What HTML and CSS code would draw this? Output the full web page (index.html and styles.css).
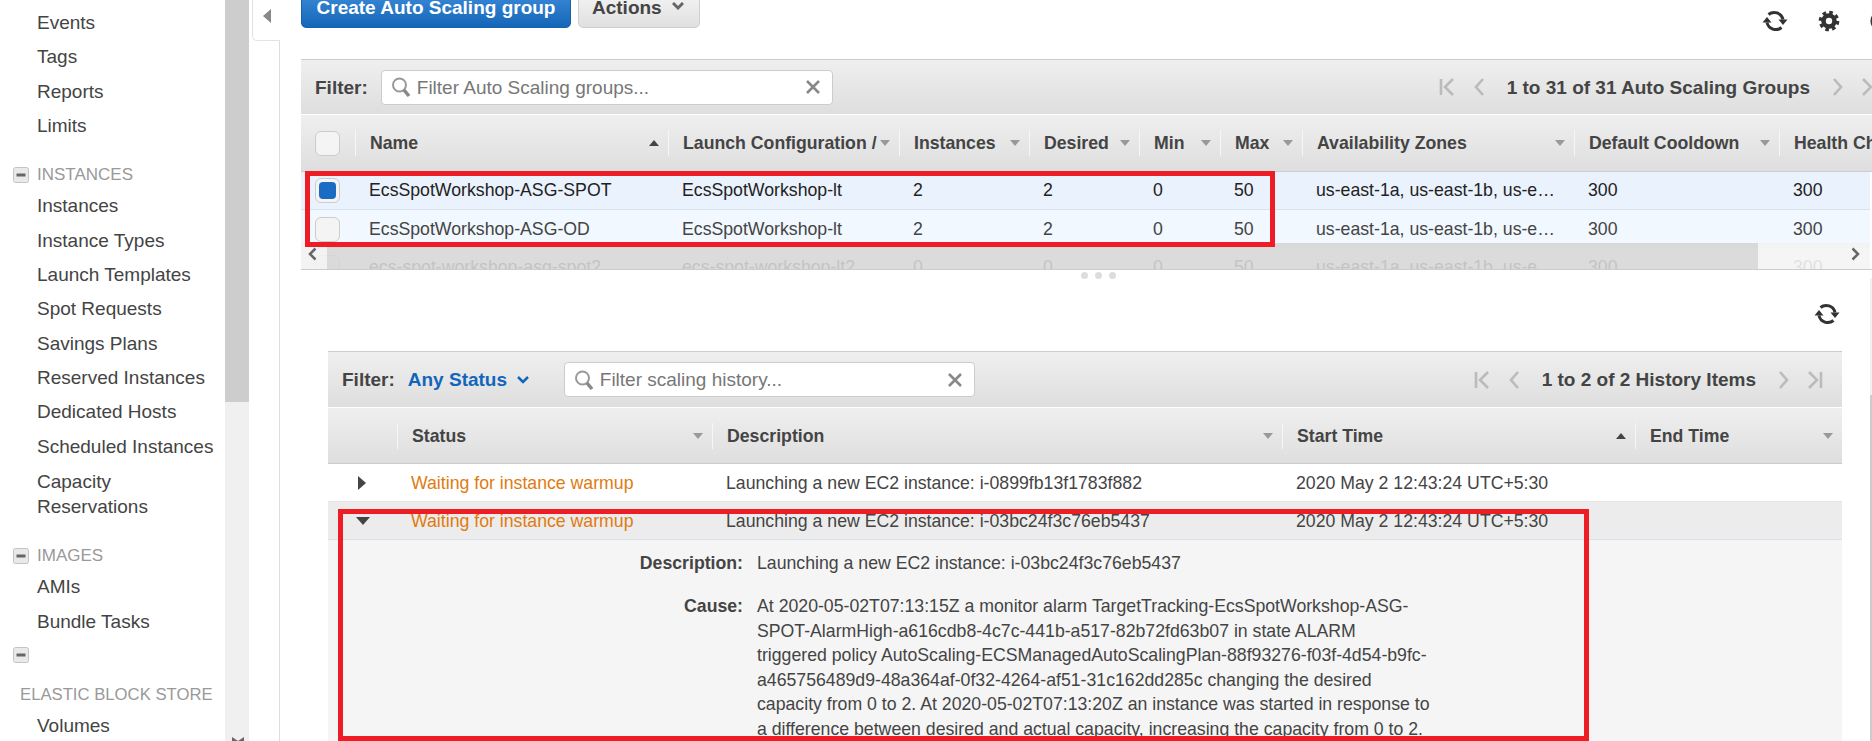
FILE: index.html
```html
<!DOCTYPE html>
<html lang="en">
<head>
<meta charset="utf-8">
<title>Auto Scaling Groups</title>
<link rel="stylesheet" href="styles.css">
</head>
<body>
<svg class="defs" width="0" height="0" aria-hidden="true">
  <symbol id="i-refresh" viewBox="0 0 26 26">
    <path d="M6.5 6.5A9 9 0 0 1 21 11.5M19.5 19.5A9 9 0 0 1 5 14.5" fill="none" stroke="#333" stroke-width="3"/>
    <path d="M16.5 11.5h9l-4.5 5.5zM0.5 14.5h9L5 9z" fill="#333"/>
  </symbol>
  <symbol id="i-search" viewBox="0 0 20 22">
    <circle cx="8.5" cy="9" r="6.5" fill="none" stroke="#999" stroke-width="2"/>
    <path d="M13 14l5 6" stroke="#888" stroke-width="3.5"/>
  </symbol>
  <symbol id="i-x" viewBox="0 0 16 16">
    <path d="M2 2l12 12M14 2L2 14" stroke="#888" stroke-width="2.6"/>
  </symbol>
  <symbol id="i-first" viewBox="0 0 16 20"><path d="M2 2v16M14 2L6 10l8 8" fill="none" stroke="#bbb" stroke-width="2.6"/></symbol>
  <symbol id="i-prev" viewBox="0 0 12 20"><path d="M10 2L3 10l7 8" fill="none" stroke="#bbb" stroke-width="2.6"/></symbol>
  <symbol id="i-next" viewBox="0 0 12 20"><path d="M2 2l7 8-7 8" fill="none" stroke="#bbb" stroke-width="2.6"/></symbol>
  <symbol id="i-last" viewBox="0 0 16 20"><path d="M14 2v16M2 2l8 8-8 8" fill="none" stroke="#bbb" stroke-width="2.6"/></symbol>
  <symbol id="i-min" viewBox="0 0 16 16">
    <rect x=".5" y=".5" width="15" height="15" rx="2" fill="#e9e9e9" stroke="#c4c4c4"/>
    <rect x="3.500" y="6.500" width="9" height="3" fill="#666"/>
  </symbol>
</svg>

<div class="app">
  <nav class="side">
    <a class="item first">Events</a>
    <a class="item">Tags</a>
    <a class="item">Reports</a>
    <a class="item">Limits</a>
    <div class="head"><svg class="min"><use href="#i-min"/></svg><span>INSTANCES</span></div>
    <a class="item">Instances</a>
    <a class="item">Instance Types</a>
    <a class="item">Launch Templates</a>
    <a class="item">Spot Requests</a>
    <a class="item">Savings Plans</a>
    <a class="item">Reserved Instances</a>
    <a class="item">Dedicated Hosts</a>
    <a class="item">Scheduled Instances</a>
    <a class="item two">Capacity<br>Reservations</a>
    <div class="head"><svg class="min"><use href="#i-min"/></svg><span>IMAGES</span></div>
    <a class="item">AMIs</a>
    <a class="item">Bundle Tasks</a>
    <div class="head-wrap"><svg class="min"><use href="#i-min"/></svg><span>ELASTIC BLOCK STORE</span></div>
    <a class="item">Volumes</a>
  </nav>

  <div class="vscroll">
    <div class="vthumb"></div>
    <svg class="vdown" viewBox="0 0 12 4"><path d="M0 0l6 4 6-4v4H0z" fill="#666"/></svg>
  </div>

  <div class="collapse"><div class="tab"><i class="tab-arrow"></i></div></div>

  <main class="content">
    <div class="toolbar">
      <button class="btn primary">Create Auto Scaling group</button>
      <button class="btn plain">Actions <svg class="chev" viewBox="0 0 12 9"><path d="M1 1l5 5 5-5" fill="none" stroke="#666" stroke-width="3"/></svg></button>
      <div class="tools">
        <svg class="ico26"><use href="#i-refresh"/></svg>
        <svg class="gear" viewBox="0 0 24 24"><circle cx="12" cy="12" r="6" fill="none" stroke="#333" stroke-width="5"/><circle cx="12" cy="12" r="9.500" fill="none" stroke="#333" stroke-width="3.500" stroke-dasharray="3.900 3.560"/></svg>
        <svg class="gear" viewBox="0 0 24 24"><circle cx="12" cy="12" r="10" fill="none" stroke="#333" stroke-width="3"/></svg>
      </div>
    </div>

    <section class="panel upper">
      <div class="bar">
        <b class="flabel">Filter:</b>
        <div class="search s-up"><svg class="s-ico"><use href="#i-search"/></svg><span>Filter Auto Scaling groups...</span><svg class="s-x"><use href="#i-x"/></svg></div>
        <div class="pager p-up">
          <svg class="pg16"><use href="#i-first"/></svg><svg class="pg12"><use href="#i-prev"/></svg>
          <b>1 to 31 of 31 Auto Scaling Groups</b>
          <svg class="pg12"><use href="#i-next"/></svg><svg class="pg16"><use href="#i-last"/></svg>
        </div>
      </div>
      <div class="thead cols-up">
        <div class="chk-cell"><i class="chk"></i></div>
        <div class="th"><span>Name</span><i class="up"></i></div>
        <div class="th"><span>Launch Configuration /</span><i class="dn"></i></div>
        <div class="th"><span>Instances</span><i class="dn"></i></div>
        <div class="th"><span>Desired</span><i class="dn"></i></div>
        <div class="th"><span>Min</span><i class="dn"></i></div>
        <div class="th"><span>Max</span><i class="dn"></i></div>
        <div class="th"><span>Availability Zones</span><i class="dn"></i></div>
        <div class="th"><span>Default Cooldown</span><i class="dn"></i></div>
        <div class="th"><span>Health Check Grace</span></div>
      </div>
      <div class="rows">
        <div class="tr cols-up sel">
          <div class="chk-cell"><i class="chk on"></i></div><div class="td">EcsSpotWorkshop-ASG-SPOT</div><div class="td">EcsSpotWorkshop-lt</div><div class="td">2</div><div class="td">2</div><div class="td">0</div><div class="td">50</div><div class="td">us-east-1a, us-east-1b, us-e…</div><div class="td">300</div><div class="td">300</div>
        </div>
        <div class="tr cols-up alt">
          <div class="chk-cell"><i class="chk"></i></div><div class="td">EcsSpotWorkshop-ASG-OD</div><div class="td">EcsSpotWorkshop-lt</div><div class="td">2</div><div class="td">2</div><div class="td">0</div><div class="td">50</div><div class="td">us-east-1a, us-east-1b, us-e…</div><div class="td">300</div><div class="td">300</div>
        </div>
        <div class="tr cols-up faded">
          <div class="chk-cell"><i class="chk"></i></div><div class="td">ecs-spot-workshop-asg-spot2</div><div class="td">ecs-spot-workshop-lt2</div><div class="td">0</div><div class="td">0</div><div class="td">0</div><div class="td">50</div><div class="td">us-east-1a, us-east-1b, us-e…</div><div class="td">300</div><div class="td">300</div>
        </div>
      </div>
      <div class="hscroll">
        <div class="hs-btn"><svg class="hs-ch" viewBox="0 0 9 14"><path d="M7.500 1.500L2 7l5.500 5.500" fill="none" stroke="#666" stroke-width="2.500"/></svg></div>
        <div class="hs-thumb"></div>
        <div class="hs-end"><svg class="hs-ch" viewBox="0 0 9 14"><path d="M1.500 1.500L7 7l-5.500 5.500" fill="none" stroke="#666" stroke-width="2.500"/></svg></div>
      </div>
      <div class="mark mark-up"></div>
    </section>

    <div class="splitter"><i></i><i></i><i></i></div>
    <div class="refresh-row"><svg class="ico26"><use href="#i-refresh"/></svg></div>

    <section class="panel lower">
      <div class="bar">
        <b class="flabel">Filter:</b>
        <b class="any">Any Status <svg class="chev-b" viewBox="0 0 12 8"><path d="M1 1l5 5 5-5" fill="none" stroke="#16b" stroke-width="2.500"/></svg></b>
        <div class="search s-lo"><svg class="s-ico"><use href="#i-search"/></svg><span>Filter scaling history...</span><svg class="s-x"><use href="#i-x"/></svg></div>
        <div class="pager p-lo">
          <svg class="pg16"><use href="#i-first"/></svg><svg class="pg12"><use href="#i-prev"/></svg>
          <b>1 to 2 of 2 History Items</b>
          <svg class="pg12"><use href="#i-next"/></svg><svg class="pg16"><use href="#i-last"/></svg>
        </div>
      </div>
      <div class="thead cols-lo">
        <div></div>
        <div class="th"><span>Status</span><i class="dn"></i></div>
        <div class="th"><span>Description</span><i class="dn"></i></div>
        <div class="th"><span>Start Time</span><i class="up"></i></div>
        <div class="th"><span>End Time</span><i class="dn"></i></div>
      </div>
      <div class="tr cols-lo hist">
        <div class="exp"><i class="tri-r"></i></div><div class="td warn">Waiting for instance warmup</div><div class="td">Launching a new EC2 instance: i-0899fb13f1783f882</div><div class="td">2020 May 2 12:43:24 UTC+5:30</div><div class="td"></div>
      </div>
      <div class="tr cols-lo hist open">
        <div class="exp"><i class="tri-d"></i></div><div class="td warn">Waiting for instance warmup</div><div class="td">Launching a new EC2 instance: i-03bc24f3c76eb5437</div><div class="td">2020 May 2 12:43:24 UTC+5:30</div><div class="td"></div>
      </div>
      <div class="detail">
        <div class="d-row"><b class="d-k">Description:</b><div class="d-v">Launching a new EC2 instance: i-03bc24f3c76eb5437</div></div>
        <div class="d-row"><b class="d-k">Cause:</b><div class="d-v">At 2020-05-02T07:13:15Z a monitor alarm TargetTracking-EcsSpotWorkshop-ASG-SPOT-AlarmHigh-a616cdb8-4c7c-441b-a517-82b72fd63b07 in state ALARM<br>triggered policy AutoScaling-ECSManagedAutoScalingPlan-88f93276-f03f-4d54-b9fc-a465756489d9-48a364af-0f32-4264-af51-31c162dd285c changing the desired capacity from 0 to 2. At 2020-05-02T07:13:20Z an instance was started in response to a difference between desired and actual capacity, increasing the capacity from 0 to 2.</div></div>
      </div>
      <div class="mark mark-lo"></div>
    </section>

    <div class="edge"><div class="edge-thumb"></div></div>
  </main>
</div>
</body>
</html>
```

FILE: styles.css
```css
* { box-sizing: border-box; }
html, body { margin: 0; height: 741px; overflow: hidden; background: #fff; }
body { font: 17.7px/25px "Liberation Sans", Arial, sans-serif; color: #444; }
.defs { position: absolute; }
svg { display: block; flex: none; }
i { display: block; flex: none; }

.app { display: flex; height: 741px; width: 1872px; overflow: hidden; }

/* sidebar */
.side { width: 225px; flex: none; padding-top: 5.5px; overflow: hidden; font-size: 19px; }
.item { display: block; padding: 4.67px 0 4.67px 37px; color: #444; width: 225px; white-space: nowrap; }
.item.two { padding-top: 5.67px; }
.head { display: flex; align-items: center; height: 30px; margin-top: 16px; padding: 2px 0 0 13px; gap: 8px; color: #999; font-size: 17px; }
.head-wrap { margin-top: 2px; height: 68px; padding: 7px 0 0 13px; color: #999; font-size: 16.7px; display: flex; flex-direction: column; gap: 22px; line-height: 20px; }
.head-wrap span { margin-left: 7px; white-space: nowrap; }
.min { width: 16px; height: 16px; }

.vscroll { width: 24px; flex: none; background: #f0f0f0; display: flex; flex-direction: column; }
.vthumb { height: 402px; background: #cdcdcd; }
.vdown { width: 12px; height: 4px; margin: auto 0 0 7px; }

.collapse { width: 31px; flex: none; padding-left: 3px; border-right: 1px solid #ddd; }
.tab { height: 41px; margin-right: -1px; background: #fff; border: 1px solid #e3e3e3; border-top: 0; border-right: 0; border-bottom-left-radius: 5px; padding: 9px 0 0 10px; }
.tab-arrow { width: 0; height: 0; border: 7px solid transparent; border-left: 0; border-right: 8px solid #888; }

/* main */
.content { flex: 1; min-width: 0; position: relative; overflow: hidden; }
.toolbar { display: flex; height: 59px; padding-left: 21px; align-items: flex-start; }
.btn { height: 36px; margin-top: -8px; padding: 0 0 4px; font: bold 19px "Liberation Sans", Arial, sans-serif; border-radius: 0 0 5px 5px; white-space: nowrap; }
.primary { width: 270px; color: #fff; border: 1px solid #1662ad; background: linear-gradient(#3b8ad8, #1566b7); }
.plain { width: 122px; margin-left: 7px; color: #444; border: 1px solid #cfcfcf; background: linear-gradient(#f4f4f4, #e0e0e0); display: flex; align-items: center; gap: 10px; padding-left: 13px; }
.chev { width: 12px; height: 9px; margin-top: -3px; }
.tools { margin-left: auto; margin-right: -20px; margin-top: 8px; display: flex; gap: 30px; align-items: center; }
.ico26 { width: 26px; height: 26px; }
.gear { width: 22px; height: 22px; }

.panel { position: relative; }
.upper { margin-left: 21px; width: 1571px; height: 211px; overflow: hidden; border-bottom: 1px solid #ccc; }
.lower { margin-left: 48px; width: 1514px; }

.bar { display: flex; align-items: center; height: 56px; border-top: 1px solid #ccc; background: linear-gradient(#efefef, #dedede); padding-left: 14px; border-bottom: 1px solid #fff; font-size: 19px; }
.lower .bar { height: 57px; }
.flabel { color: #444; }
.search { display: flex; align-items: center; height: 35px; background: #fff; border: 1px solid #ccc; border-radius: 4px; color: #777; white-space: nowrap; }
.s-up { width: 452px; margin-left: 13px; }
.s-lo { width: 411px; }
.s-ico { width: 20px; height: 22px; margin: 0 6px 0 9px; }
.search span { flex: 1; }
.s-x { width: 16px; height: 16px; margin-right: 11px; }
.any { margin-left: 13px; width: 156px; color: #1166bb; display: flex; align-items: center; gap: 10px; white-space: nowrap; }
.chev-b { width: 12px; height: 8px; }
.pager { display: flex; align-items: center; margin-left: auto; }
.pager b { color: #444; margin: 0 22px; white-space: nowrap; }
.pg16 { width: 16px; height: 20px; margin-right: 18px; }
.pg12 { width: 12px; height: 20px; }
.pager b + .pg12 { margin-right: 17px; }
.pager .pg12 + .pg16 { margin-right: 0; }
.p-up { margin-right: -5px; }
.p-lo { margin-right: 19px; }

.cols-up { display: grid; grid-template-columns: 54px 313px 231px 130px 110px 81px 82px 272px 205px 1fr; }
.cols-lo { display: grid; grid-template-columns: 69px 315px 570px 353px 207px; }

.thead { height: 56px; align-items: center; background: linear-gradient(#efefef, #dedede); border-bottom: 1px solid #ccc; }
.upper .thead { height: 57px; }
.th { height: 26px; display: flex; align-items: center; justify-content: space-between; min-width: 0; padding: 0 9px 0 14px; border-left: 1px solid #f6f6f6; font-weight: bold; color: #444; white-space: nowrap; }
.lower .th { padding-top: 1px; }
.dn, .up { width: 0; height: 0; border: 5.5px solid transparent; }
.dn { border-bottom: 0; border-top: 6px solid #999; }
.up { border-top: 0; border-bottom: 6px solid #444; }

.chk-cell { padding-left: 14px; display: flex; align-items: center; }
.chk { width: 25px; height: 25px; border: 1px solid #ccc; border-radius: 6px; background: #f4f4f4; }
.chk.on { padding: 3px; background: #f4f4f4; }
.chk.on::before { content: ""; display: block; height: 100%; background: #1a6bc4; border-radius: 4px; }

.rows { width: 1569px; }
.tr { height: 38px; align-items: center; }
.td { padding-left: 14px; white-space: nowrap; overflow: hidden; min-width: 0; }
.sel { background: #eaf2fd; border-bottom: 1px solid #d8e2ec; color: #222; }
.alt { background: #f1f8ff; }
.faded { color: #aaa; }
.faded .chk { opacity: .5; }

.hscroll { position: absolute; left: 0; top: 184px; width: 1569px; height: 26px; display: flex; }
.hs-btn { width: 26px; background: rgba(241,241,241,.85); padding: 4px 0 0 7px; }
.hs-thumb { width: 1431px; background: rgba(205,205,205,.72); }
.hs-end { flex: 1; background: rgba(241,241,241,.75); padding: 4px 0 0 93px; }
.hs-ch { width: 9px; height: 14px; }

.mark { position: absolute; border: 5px solid #ee1c25; pointer-events: none; }
.mark-up { left: 4px; top: 112px; width: 970px; height: 76px; }
.mark-lo { left: 10px; top: 158px; width: 1251px; height: 232px; }

.splitter { height: 11px; display: flex; justify-content: center; align-items: center; gap: 7px; width: 1636px; }
.splitter i { width: 7px; height: 7px; border-radius: 50%; background: #ddd; }
.refresh-row { height: 70px; display: flex; justify-content: flex-end; padding: 20px 32px 0 0; }

.hist { border-bottom: 1px solid #e4e4e4; height: 38px; }
.hist .td { padding-top: 2px; }
.hist.open { background: #ececec; border-bottom-color: #d9e2ec; }
.warn { color: #e07b0f; }
.exp { padding-left: 30px; }
.tri-r { width: 0; height: 0; border: 7px solid transparent; border-right: 0; border-left: 8px solid #444; }
.tri-d { width: 0; height: 0; margin-left: -2px; border: 7px solid transparent; border-bottom: 0; border-top: 8px solid #444; }

.detail { background: #f5f5f5; padding-top: 11px; height: 210px; overflow: hidden; }
.d-row { display: flex; gap: 14px; margin-bottom: 18px; }
.d-k { width: 415px; flex: none; text-align: right; color: #444; }
.d-v { width: 680px; line-height: 24.6px; }

.edge { position: absolute; right: 0; top: 278px; bottom: 0; width: 2px; background: #f0f0f0; }
.edge-thumb { margin-top: 117px; height: 400px; background: #ccc; }
```
